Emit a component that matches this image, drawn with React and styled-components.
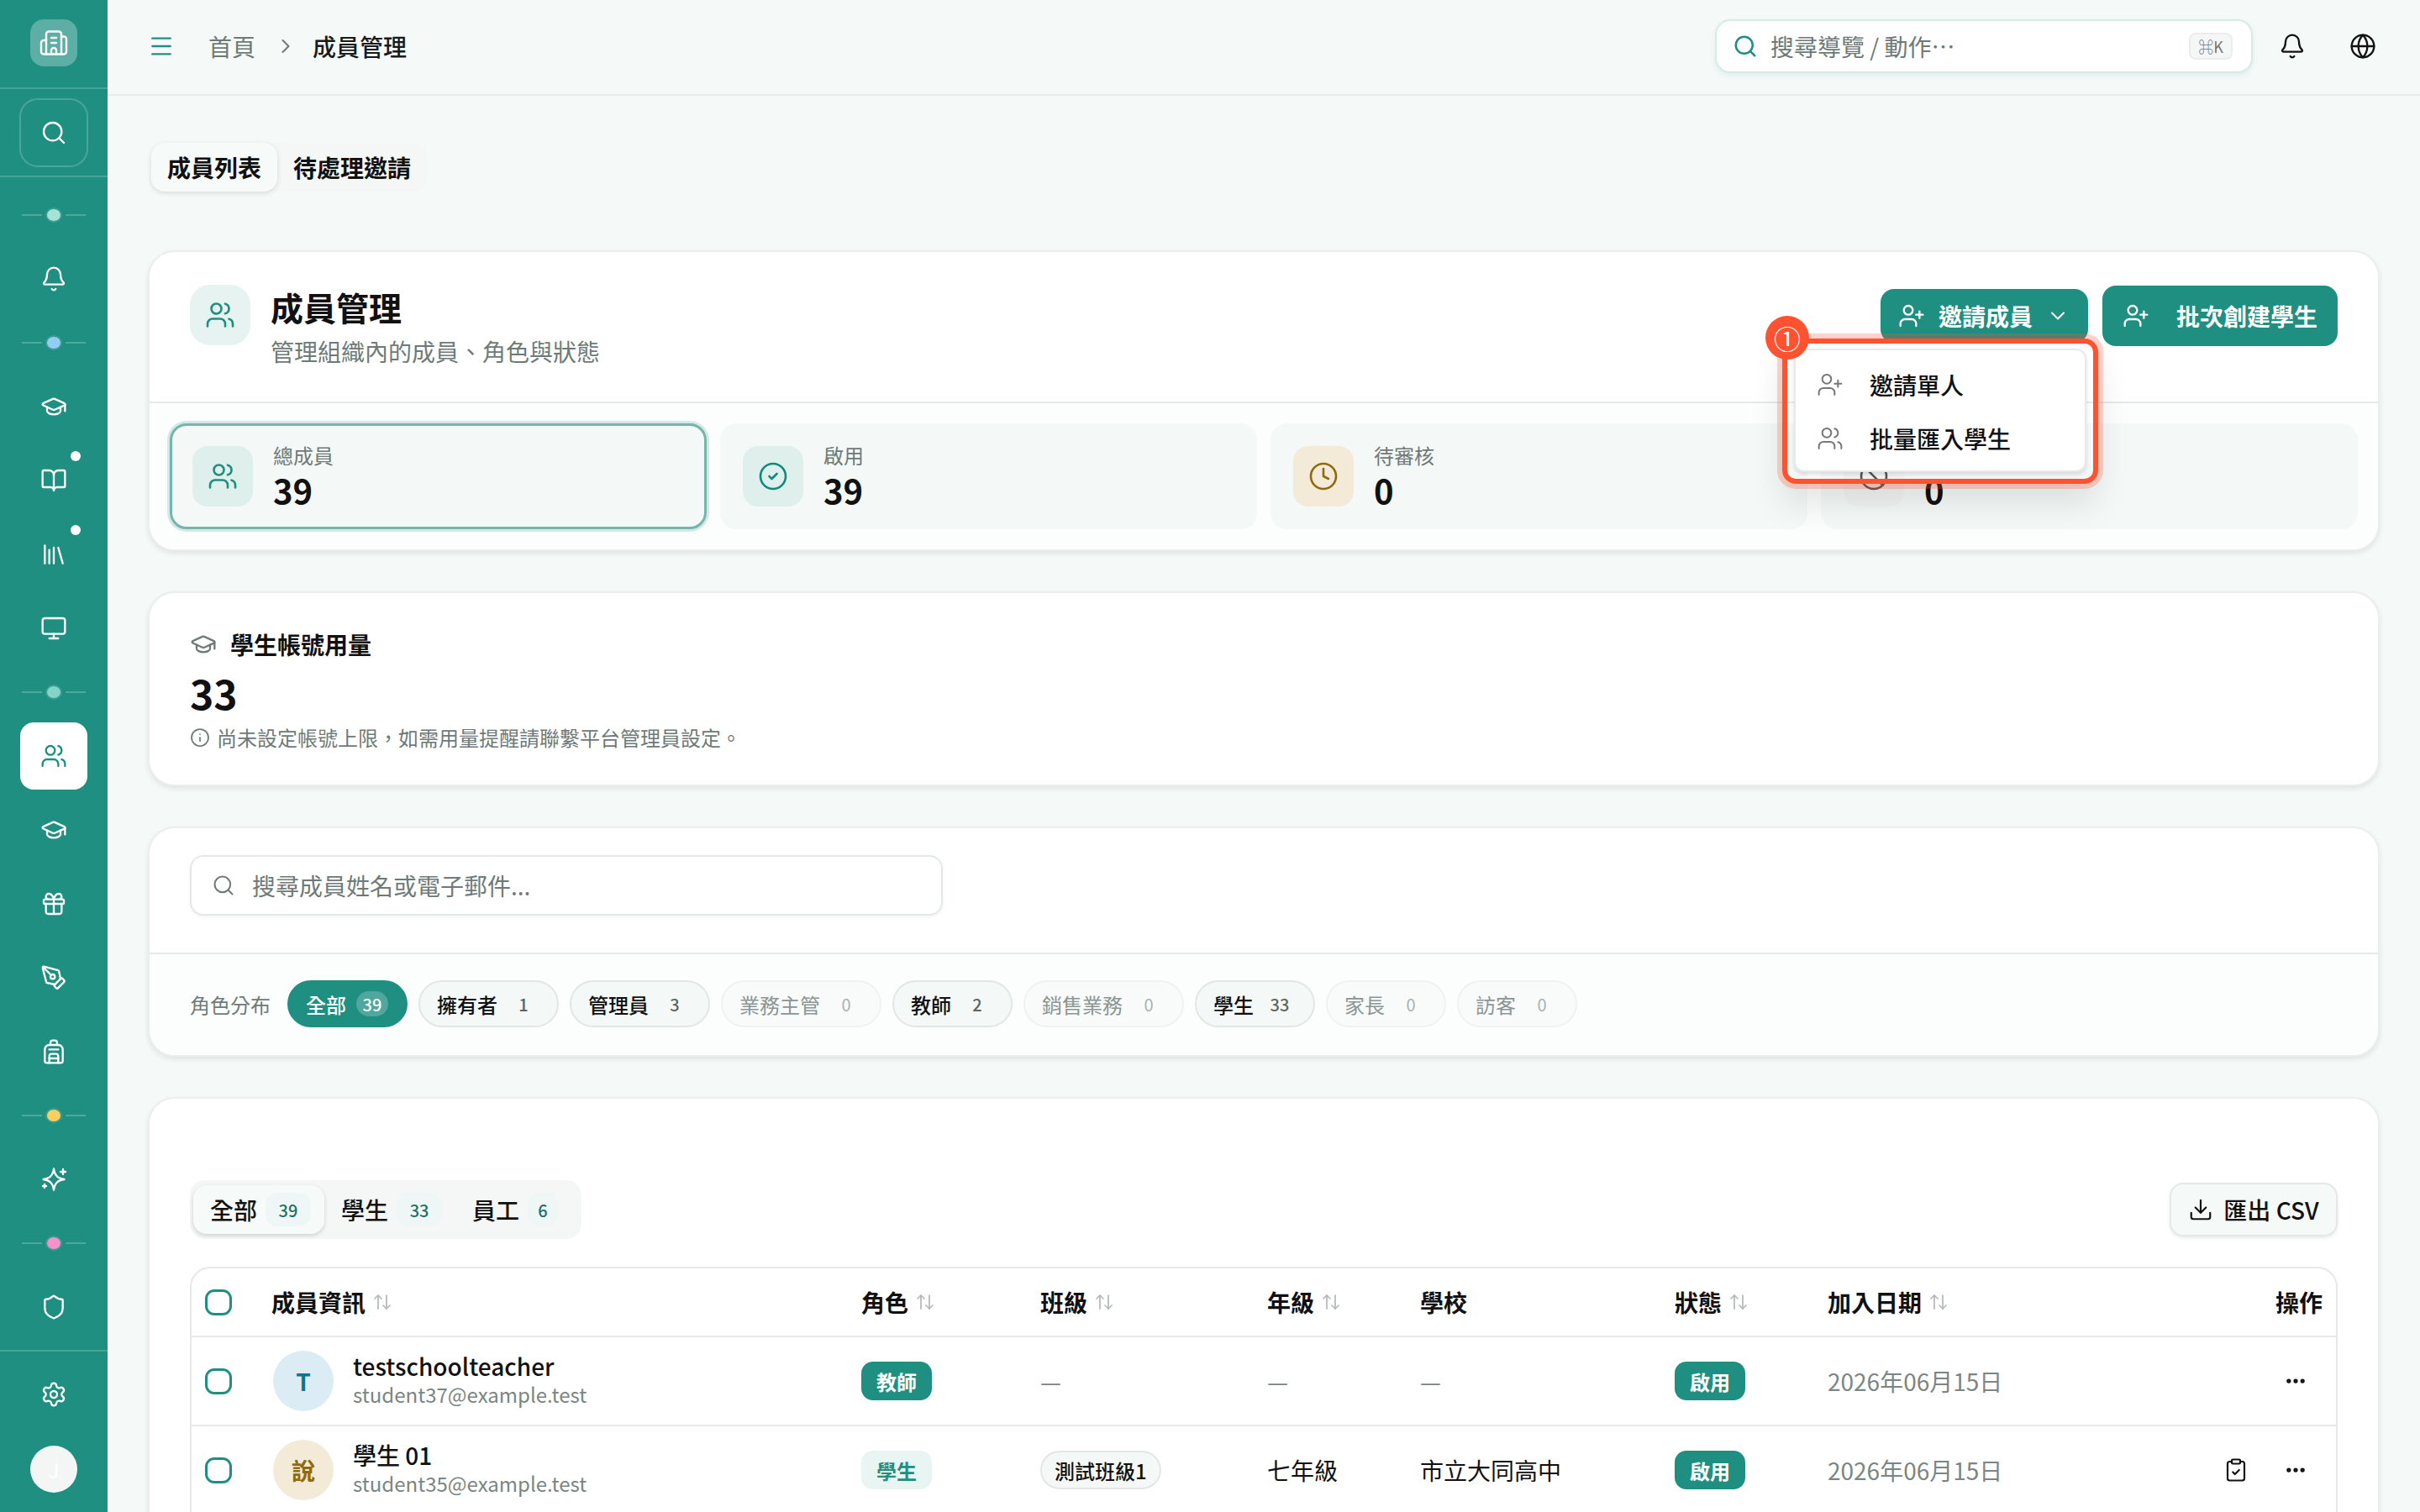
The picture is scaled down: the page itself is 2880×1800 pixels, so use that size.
import React from "react";
import styled, { createGlobalStyle } from "styled-components";
import {
  ArrowUpDown,
  Backpack,
  Ban,
  Bell,
  BookOpen,
  Building2,
  ChevronDown,
  ChevronRight,
  CircleCheck,
  ClipboardCheck,
  Clock,
  Download,
  Ellipsis,
  Gift,
  Globe,
  GraduationCap,
  Info,
  Library,
  Menu,
  Monitor,
  PenTool,
  Search,
  Settings,
  Shield,
  UserPlus,
  Users
} from "lucide-react";

const TEAL = "#1f8f82";

const GlobalStyle = createGlobalStyle`
  html, body {
    margin: 0;
    height: 100%;
    overflow: hidden;
    background: #f5f9f8;
    font-family: "Noto Sans CJK TC", "Noto Sans", sans-serif;
    color: #111;
  }
  * {
    box-sizing: border-box;
  }
`;

const Shell = styled.div`
  display: flex;
  width: 2880px;
  height: 1800px;
  overflow: hidden;
`;

const Sidebar = styled.aside`
  flex: 0 0 128px;
  height: 1800px;
  background: ${TEAL};
  display: flex;
  flex-direction: column;
  align-items: center;
  color: #fff;
`;

const LogoRow = styled.div`
  width: 100%;
  height: 106px;
  display: flex;
  align-items: center;
  justify-content: center;
  padding-bottom: 2px;
  border-bottom: 2px solid rgba(255, 255, 255, 0.18);
`;

const LogoTile = styled.div`
  width: 56px;
  height: 56px;
  border-radius: 16px;
  background: rgba(255, 255, 255, 0.28);
  display: flex;
  align-items: center;
  justify-content: center;
`;

const SearchRow = styled.div`
  width: 100%;
  height: 106px;
  display: flex;
  align-items: center;
  justify-content: center;
  border-bottom: 2px solid rgba(255, 255, 255, 0.18);
`;

const SearchTile = styled.div`
  width: 82px;
  height: 82px;
  border-radius: 22px;
  border: 2px solid rgba(255, 255, 255, 0.2);
  display: flex;
  align-items: center;
  justify-content: center;
`;

const NavList = styled.nav`
  flex: 1;
  display: flex;
  flex-direction: column;
  align-items: center;
  padding-top: 9px;
`;

const NavItem = styled.div`
  position: relative;
  width: 80px;
  height: 80px;
  margin: ${(p) => (p.$tight ? "8px 0 0" : "0")};
  border-radius: 16px;
  display: flex;
  align-items: center;
  justify-content: center;
  background: ${(p) => (p.$active ? "#fff" : "transparent")};
  color: ${(p) => (p.$active ? TEAL : "#fff")};
`;

const NavBadge = styled.span`
  position: absolute;
  top: 5px;
  right: 8px;
  width: 12px;
  height: 12px;
  border-radius: 50%;
  background: #fff;
`;

const Sep = styled.div`
  height: 72px;
  display: flex;
  align-items: center;
  gap: 6px;
`;

const SepLine = styled.span`
  width: 24px;
  height: 2px;
  background: rgba(255, 255, 255, 0.22);
`;

const SepDot = styled.span`
  width: 16px;
  height: 14px;
  border-radius: 50%;
  background: ${(p) => p.$color};
  box-shadow: 0 0 0 2px rgba(255, 255, 255, 0.12);
`;

const SideFooter = styled.div`
  width: 100%;
  border-top: 2px solid rgba(255, 255, 255, 0.18);
  display: flex;
  flex-direction: column;
  align-items: center;
  padding-top: 11px;
  height: 193px;
  margin-top: 11px;
`;

const SideAvatar = styled.div`
  margin-top: 21px;
  width: 56px;
  height: 56px;
  border-radius: 50%;
  background: #f4f6f5;
  color: #fff;
  font-size: 24px;
  display: flex;
  align-items: center;
  justify-content: center;
`;

const Main = styled.main`
  flex: 1;
  min-width: 0;
  display: flex;
  flex-direction: column;
`;

const Topbar = styled.header`
  flex: 0 0 114px;
  display: flex;
  align-items: center;
  padding: 0 50px 2px 48px;
  border-bottom: 2px solid #e7ecea;
`;

const Crumbs = styled.div`
  flex: 1;
  display: flex;
  align-items: center;
  font-size: 28px;
  color: #6e7a78;
`;

const HomeCrumb = styled.span`
  margin-left: 40px;
`;

const CrumbArrow = styled.span`
  display: flex;
  margin: 0 18px 0 22px;
`;

const CrumbCurrent = styled.span`
  color: #1a1a1a;
  font-weight: 500;
`;

const TopSearch = styled.div`
  width: 640px;
  height: 64px;
  margin-top: 0;
  border-radius: 18px;
  background: #fff;
  border: 2px solid #d6ebe6;
  box-shadow: 0 3px 6px rgba(31, 143, 130, 0.1);
  display: flex;
  align-items: center;
  padding: 0 22px 0 19px;
  gap: 15px;
  font-size: 28px;
  color: #6e7a78;
`;

const Placeholder = styled.span`
  flex: 1;
`;

const Kbd = styled.span`
  width: 52px;
  height: 32px;
  border-radius: 8px;
  border: 2px solid #e9eeec;
  background: #f5f7f6;
  font-size: 18px;
  color: #6e7a78;
  display: flex;
  align-items: center;
  justify-content: center;
`;

const TopIcons = styled.div`
  display: flex;
  align-items: center;
  gap: 52px;
  margin-left: 31px;
  margin-right: 2px;
  color: #111;
`;

const Content = styled.div`
  flex: 1;
  padding: 56px 48px 0;
  display: flex;
  flex-direction: column;
  gap: 48px;
`;

const PageTabs = styled.div`
  align-self: flex-start;
  margin: 0 0 22px 4px;
  height: 58px;
  display: flex;
  align-items: center;
  background: #f4f7f6;
  border-radius: 16px;
`;

const PageTab = styled.div`
  height: 58px;
  padding: 0 19px;
  border-radius: 16px;
  display: flex;
  align-items: center;
  font-size: 28px;
  font-weight: 600;
  background: ${(p) => (p.$active ? "#f6faf9" : "transparent")};
  box-shadow: ${(p) => (p.$active ? "0 2px 6px rgba(0, 0, 0, 0.12)" : "none")};
`;

const Card = styled.section`
  flex: none;
  background: #fff;
  border: 2px solid #eceeed;
  border-radius: 32px;
  box-shadow: 0 3px 6px rgba(0, 0, 0, 0.09);
`;

const HeadRow = styled.div`
  height: 180px;
  padding: 0 48px;
  display: flex;
  align-items: center;
  gap: 24px;
  border-bottom: 2px solid #e7e9e8;
`;

const HeadTile = styled.div`
  width: 72px;
  height: 72px;
  margin-bottom: 28px;
  border-radius: 24px;
  background: #e6f3f0;
  color: ${TEAL};
  display: flex;
  align-items: center;
  justify-content: center;
`;

const HeadText = styled.div`
  flex: 1;
  margin-bottom: 4px;
`;

const PageTitle = styled.h1`
  margin: 0 0 4px;
  font-size: 39px;
  line-height: 58px;
  font-weight: 700;
`;

const PageSub = styled.p`
  margin: 0;
  font-size: 28px;
  line-height: 40px;
  color: #6e7a78;
`;

const HeadActions = styled.div`
  display: flex;
  align-items: flex-start;
  gap: 17px;
  margin: 0 0 26px 0;
`;

const MenuAnchor = styled.div`
  position: relative;
  padding-top: 4px;
`;

const PrimaryButton = styled.button`
  height: ${(p) => (p.$tall ? "72px" : "64px")};
  border: 0;
  border-radius: 16px;
  background: ${TEAL};
  color: #fff;
  font: inherit;
  font-size: 28px;
  font-weight: 600;
  padding: ${(p) => (p.$tall ? "0 24px" : "0 22px 0 21px")};
  display: flex;
  align-items: center;
  gap: ${(p) => p.$gap};
`;

const Highlight = styled.div`
  position: absolute;
  top: 63px;
  right: -12px;
  width: 376px;
  height: 173px;
  border: 6px solid #ff5230;
  border-radius: 16px;
  box-shadow: 0 0 0 6px rgba(255, 82, 48, 0.25), 0 24px 40px rgba(0, 0, 0, 0.1);
  padding: 6px 8px 8px;
  z-index: 3;
`;

const Marker = styled.div`
  position: absolute;
  top: -33px;
  left: -26px;
  width: 52px;
  height: 52px;
  border-radius: 50%;
  background: #ff5230;
  color: #fff;
  font-size: 32px;
  display: flex;
  align-items: center;
  justify-content: center;
`;

const Dropdown = styled.div`
  height: 100%;
  border-radius: 12px;
  background: #fff;
  border: 2px solid #e8eaea;
  box-shadow: 0 3px 5px rgba(0, 0, 0, 0.12);
  padding: 9px 0;
`;

const DropItem = styled.div`
  height: 64px;
  padding: 0 25px;
  display: flex;
  align-items: center;
  gap: 31px;
  font-size: 28px;
  font-weight: 500;
  color: #111;
`;

const DropIcon = styled.span`
  display: flex;
  color: #777;
`;

const StatGrid = styled.div`
  display: grid;
  grid-template-columns: repeat(4, 1fr);
  gap: 16px;
  padding: 24px;
  background: #fcfdfd;
  border-radius: 0 0 30px 30px;
`;

const Stat = styled.div`
  height: 126px;
  padding: 0 24px;
  border-radius: 20px;
  background: #f4f9f7;
  display: flex;
  align-items: center;
  gap: 24px;
  border: 3px solid ${(p) => (p.$active ? "#76b5ac" : "transparent")};
  box-shadow: ${(p) => (p.$active ? "0 0 0 3px rgba(31, 143, 130, 0.18)" : "none")};
`;

const StatTile = styled.div`
  width: 72px;
  height: 72px;
  border-radius: 18px;
  background: ${(p) => p.$bg};
  color: ${(p) => p.$fg};
  display: flex;
  align-items: center;
  justify-content: center;
`;

const StatLabel = styled.div`
  font-size: 24px;
  line-height: 32px;
  color: #6e7a78;
`;

const StatValue = styled.div`
  font-size: 40px;
  line-height: 50px;
  font-weight: 700;
`;

const UsageCard = styled(Card)`
  height: 232px;
  padding: 41px 48px 0;
`;

const UsageTitle = styled.div`
  display: flex;
  align-items: center;
  gap: 16px;
  font-size: 28px;
  line-height: 40px;
  font-weight: 600;
  svg {
    color: #6e7a78;
  }
`;

const UsageValue = styled.div`
  font-size: 48px;
  line-height: 74px;
  margin-bottom: 1px;
  font-weight: 700;
`;

const UsageNote = styled.div`
  display: flex;
  align-items: center;
  gap: 8px;
  font-size: 24px;
  line-height: 32px;
  color: #6e7a78;
`;

const SearchPane = styled.div`
  height: 150px;
  padding: 32px 48px 0;
  border-bottom: 2px solid #e7e9e8;
`;

const SearchInput = styled.div`
  width: 896px;
  height: 72px;
  border: 2px solid #e4e8e6;
  border-radius: 16px;
  box-shadow: 0 2px 4px rgba(0, 0, 0, 0.05);
  display: flex;
  align-items: center;
  gap: 20px;
  padding: 0 24px;
  font-size: 28px;
  color: #6e7a78;
`;

const RolePane = styled.div`
  height: 120px;
  padding: 0 48px 2px;
  display: flex;
  align-items: center;
  gap: 13px;
  background: #fcfdfd;
  border-radius: 0 0 30px 30px;
`;

const RoleLabel = styled.span`
  width: 96px;
  margin-right: 7px;
  font-size: 24px;
  color: #6e7a78;
`;

const Chip = styled.div`
  height: 56px;
  padding: 0 21px 0 20px;
  border-radius: 28px;
  display: flex;
  align-items: center;
  gap: 12px;
  font-size: 24px;
  font-weight: ${(p) => (p.$active || p.$filled ? 500 : 400)};
  color: ${(p) => (p.$active ? "#fff" : p.$filled ? "#111" : "#8b9593")};
  background: ${(p) => (p.$active ? TEAL : p.$filled ? "#f4f8f7" : "#f9fbfa")};
  border: 2px solid ${(p) => (p.$active ? TEAL : p.$filled ? "#e2e7e5" : "#eff2f1")};
`;

const ChipCount = styled.span`
  min-width: 38px;
  height: 30px;
  padding: 0 6px;
  border-radius: 15px;
  display: flex;
  align-items: center;
  justify-content: center;
  font-size: 20px;
  color: ${(p) => (p.$active ? "#fff" : p.$filled ? "#5b6664" : "#a9b2b0")};
  background: ${(p) => (p.$active ? "rgba(255, 255, 255, 0.22)" : "transparent")};
`;

const TableCard = styled(Card)`
  padding: 97px 48px 0;
  border-radius: 32px 32px 0 0;
  height: 560px;
`;

const ToolRow = styled.div`
  display: flex;
  align-items: center;
  justify-content: space-between;
  margin-bottom: 33px;
`;

const ViewTabs = styled.div`
  height: 70px;
  padding: 0 12px 0 4px;
  border-radius: 18px;
  background: #f5f7f6;
  display: flex;
  align-items: center;
`;

const ViewTab = styled.div`
  height: 58px;
  padding: 0 16px 0 20px;
  border-radius: 16px;
  display: flex;
  align-items: center;
  gap: 10px;
  font-size: 28px;
  font-weight: 500;
  background: ${(p) => (p.$active ? "#f6faf9" : "transparent")};
  box-shadow: ${(p) => (p.$active ? "0 2px 5px rgba(0, 0, 0, 0.16)" : "none")};
`;

const ViewCount = styled.span`
  min-width: ${(p) => (p.$narrow ? "36px" : "54px")};
  height: 40px;
  border-radius: 14px;
  background: #eef7f5;
  color: #1c7267;
  font-size: 20px;
  display: flex;
  align-items: center;
  justify-content: center;
`;

const ExportButton = styled.button`
  width: 200px;
  height: 64px;
  border: 2px solid #e4e8e6;
  border-radius: 16px;
  background: #f5f9f8;
  box-shadow: 0 2px 4px rgba(0, 0, 0, 0.08);
  font: inherit;
  font-size: 28px;
  font-weight: 500;
  color: #111;
  display: flex;
  align-items: center;
  justify-content: center;
  gap: 12px;
`;

const Table = styled.div`
  border: 2px solid #e6e9e8;
  border-bottom: 0;
  border-radius: 24px 24px 0 0;
`;

const cols = "95px 702px 213px 270px 182px 303px 182px 300px 1fr";

const HeadCells = styled.div`
  display: grid;
  grid-template-columns: ${cols};
  height: 82px;
  align-items: center;
  border-bottom: 2px solid #e6e9e8;
  font-size: 28px;
  font-weight: 600;
`;

const Row = styled.div`
  display: grid;
  grid-template-columns: ${cols};
  height: 106px;
  align-items: center;
  border-bottom: 2px solid #e6e9e8;
  font-size: 28px;
`;

const HeadCell = styled.div`
  display: flex;
  align-items: center;
  gap: 8px;
  justify-content: ${(p) => (p.$end ? "flex-end" : "flex-start")};
  padding-right: ${(p) => (p.$end ? "16px" : "0")};
  svg {
    color: #b4b9b8;
  }
`;

const CheckCell = styled.div`
  padding-left: 16px;
`;

const Check = styled.span`
  display: block;
  width: 32px;
  height: 31px;
  border: 3px solid ${TEAL};
  border-radius: 11px;
  background: #fff;
`;

const Member = styled.div`
  display: flex;
  align-items: center;
  gap: 23px;
  padding-left: 2px;
`;

const Avatar = styled.div`
  width: 72px;
  height: 72px;
  border-radius: 50%;
  background: ${(p) => p.$bg};
  color: ${(p) => p.$fg};
  font-size: 28px;
  font-weight: 600;
  display: flex;
  align-items: center;
  justify-content: center;
`;

const MemberText = styled.div`
  padding-bottom: 4px;
`;

const MemberName = styled.div`
  font-size: 28px;
  line-height: 36px;
  font-weight: 500;
`;

const MemberMail = styled.div`
  font-size: 24px;
  line-height: 32px;
  color: #7b8583;
`;

const Badge = styled.span`
  display: inline-flex;
  align-items: center;
  justify-content: center;
  height: 46px;
  padding: 0 18px;
  border-radius: 14px;
  font-size: 24px;
  font-weight: 600;
  background: ${(p) => (p.$soft ? "#e8f5f2" : TEAL)};
  color: ${(p) => (p.$soft ? TEAL : "#fff")};
`;

const ClassChip = styled.span`
  display: inline-flex;
  align-items: center;
  height: 46px;
  padding: 0 15px;
  border-radius: 23px;
  background: #f4f9f7;
  border: 2px solid #e2e7e5;
  font-size: 24px;
  font-weight: 500;
`;

const Muted = styled.span`
  color: #7b8583;
`;

const ActionCell = styled.div`
  display: flex;
  align-items: center;
  justify-content: flex-end;
  gap: 42px;
  padding-right: 34px;
`;

// lucide's sparkles sits off-centre, the one in the rail is centred with two small crosses
function StarIcon() {
  return (
    <svg width="32" height="32" viewBox="0 0 32 32" fill="none" stroke="currentColor" strokeWidth="2.3" strokeLinecap="round" strokeLinejoin="round">
      <path d="M16 3.5C17.2 11.5 20.5 14.8 28.5 16C20.5 17.2 17.2 20.5 16 28.5C14.8 20.5 11.5 17.2 3.5 16C11.5 14.8 14.8 11.5 16 3.5Z" />
      <path d="M27 4v6M24 7h6" />
      <path d="M5 22v4M3 24h4" />
    </svg>
  );
}

const navIcon = { size: 32, strokeWidth: 1.75 };

const Rail = [
  { dot: "#a5e3d6" },
  { icon: Bell },
  { dot: "#93cdf6" },
  { icon: GraduationCap },
  { icon: BookOpen, badge: true, tight: true },
  { icon: Library, badge: true, tight: true },
  { icon: Monitor, tight: true },
  { dot: "#84d3c8" },
  { icon: Users, active: true },
  { icon: GraduationCap, tight: true },
  { icon: Gift, tight: true },
  { icon: PenTool, tight: true },
  { icon: Backpack, tight: true },
  { dot: "#ffce5c" },
  { icon: StarIcon },
  { dot: "#f592cb" },
  { icon: Shield }
];

const roles = [
  { name: "全部", count: 39, active: true },
  { name: "擁有者", count: 1, filled: true },
  { name: "管理員", count: 3, filled: true },
  { name: "業務主管", count: 0 },
  { name: "教師", count: 2, filled: true },
  { name: "銷售業務", count: 0 },
  { name: "學生", count: 33, filled: true },
  { name: "家長", count: 0 },
  { name: "訪客", count: 0 }
];

const stats = [
  { label: "總成員", value: 39, Icon: Users, bg: "#dfefec", fg: TEAL, active: true },
  { label: "啟用", value: 39, Icon: CircleCheck, bg: "#dfefec", fg: "#0f8a7c" },
  { label: "待審核", value: 0, Icon: Clock, bg: "#f3ead7", fg: "#8f6b10" },
  { label: "停用", value: 0, Icon: Ban, bg: "#f1f4f3", fg: "#555" }
];

const sortableHeads = [
  ["角色", true],
  ["班級", true],
  ["年級", true],
  ["學校", false],
  ["狀態", true],
  ["加入日期", true]
];

function SortIcon() {
  return <ArrowUpDown size={24} strokeWidth={1.75} />;
}

function SideNav() {
  return (
    <NavList>
      {Rail.map((item, i) =>
        item.dot ? (
          <Sep key={i}>
            <SepLine />
            <SepDot $color={item.dot} />
            <SepLine />
          </Sep>
        ) : (
          <NavItem key={i} $active={item.active} $tight={item.tight}>
            <item.icon {...navIcon} />
            {item.badge && <NavBadge />}
          </NavItem>
        )
      )}
    </NavList>
  );
}

export default function App() {
  return (
    <Shell>
      <GlobalStyle />
      <Sidebar>
        <LogoRow>
          <LogoTile>
            <Building2 size={36} strokeWidth={1.6} />
          </LogoTile>
        </LogoRow>
        <SearchRow>
          <SearchTile>
            <Search {...navIcon} />
          </SearchTile>
        </SearchRow>
        <SideNav />
        <SideFooter>
          <NavItem>
            <Settings {...navIcon} />
          </NavItem>
          <SideAvatar>J</SideAvatar>
        </SideFooter>
      </Sidebar>

      <Main>
        <Topbar>
          <Crumbs>
            <Menu size={32} strokeWidth={1.75} color={TEAL} />
            <HomeCrumb>首頁</HomeCrumb>
            <CrumbArrow>
              <ChevronRight size={28} strokeWidth={1.75} />
            </CrumbArrow>
            <CrumbCurrent>成員管理</CrumbCurrent>
          </Crumbs>
          <TopSearch>
            <Search size={30} strokeWidth={2} color={TEAL} />
            <Placeholder>搜尋導覽 / 動作…</Placeholder>
            <Kbd>⌘K</Kbd>
          </TopSearch>
          <TopIcons>
            <Bell size={32} strokeWidth={1.75} />
            <Globe size={32} strokeWidth={1.75} />
          </TopIcons>
        </Topbar>

        <Content>
          <PageTabs>
            <PageTab $active>成員列表</PageTab>
            <PageTab>待處理邀請</PageTab>
          </PageTabs>

          <Card>
            <HeadRow>
              <HeadTile>
                <Users size={36} strokeWidth={1.75} />
              </HeadTile>
              <HeadText>
                <PageTitle>成員管理</PageTitle>
                <PageSub>管理組織內的成員、角色與狀態</PageSub>
              </HeadText>
              <HeadActions>
                <MenuAnchor>
                  <PrimaryButton $gap="16px">
                    <UserPlus size={32} strokeWidth={1.75} />
                    邀請成員
                    <ChevronDown size={28} strokeWidth={1.75} />
                  </PrimaryButton>
                  <Highlight>
                    <Marker>①</Marker>
                    <Dropdown>
                      <DropItem>
                        <DropIcon>
                          <UserPlus size={32} strokeWidth={1.5} />
                        </DropIcon>
                        邀請單人
                      </DropItem>
                      <DropItem>
                        <DropIcon>
                          <Users size={32} strokeWidth={1.5} />
                        </DropIcon>
                        批量匯入學生
                      </DropItem>
                    </Dropdown>
                  </Highlight>
                </MenuAnchor>
                <PrimaryButton $tall $gap="32px">
                  <UserPlus size={32} strokeWidth={1.75} />
                  批次創建學生
                </PrimaryButton>
              </HeadActions>
            </HeadRow>
            <StatGrid>
              {stats.map(({ label, value, Icon, bg, fg, active }) => (
                <Stat key={label} $active={active}>
                  <StatTile $bg={bg} $fg={fg}>
                    <Icon size={36} strokeWidth={1.75} />
                  </StatTile>
                  <div>
                    <StatLabel>{label}</StatLabel>
                    <StatValue>{value}</StatValue>
                  </div>
                </Stat>
              ))}
            </StatGrid>
          </Card>

          <UsageCard>
            <UsageTitle>
              <GraduationCap size={32} strokeWidth={1.75} />
              學生帳號用量
            </UsageTitle>
            <UsageValue>33</UsageValue>
            <UsageNote>
              <Info size={24} strokeWidth={1.75} />
              尚未設定帳號上限，如需用量提醒請聯繫平台管理員設定。
            </UsageNote>
          </UsageCard>

          <Card>
            <SearchPane>
              <SearchInput>
                <Search size={28} strokeWidth={1.75} />
                搜尋成員姓名或電子郵件...
              </SearchInput>
            </SearchPane>
            <RolePane>
              <RoleLabel>角色分布</RoleLabel>
              {roles.map((r) => (
                <Chip key={r.name} $active={r.active} $filled={r.filled}>
                  {r.name}
                  <ChipCount $active={r.active} $filled={r.filled}>
                    {r.count}
                  </ChipCount>
                </Chip>
              ))}
            </RolePane>
          </Card>

          <TableCard>
            <ToolRow>
              <ViewTabs>
                <ViewTab $active>
                  全部<ViewCount>39</ViewCount>
                </ViewTab>
                <ViewTab>
                  學生<ViewCount>33</ViewCount>
                </ViewTab>
                <ViewTab>
                  員工<ViewCount $narrow>6</ViewCount>
                </ViewTab>
              </ViewTabs>
              <ExportButton>
                <Download size={30} strokeWidth={1.75} />
                匯出 CSV
              </ExportButton>
            </ToolRow>
            <Table>
              <HeadCells>
                <CheckCell>
                  <Check />
                </CheckCell>
                <HeadCell>
                  成員資訊
                  <SortIcon />
                </HeadCell>
                {sortableHeads.map(([name, sortable]) => (
                  <HeadCell key={name}>
                    {name}
                    {sortable && <SortIcon />}
                  </HeadCell>
                ))}
                <HeadCell $end>操作</HeadCell>
              </HeadCells>
              <Row>
                <CheckCell>
                  <Check />
                </CheckCell>
                <Member>
                  <Avatar $bg="#dcecf4" $fg="#0e7490">
                    T
                  </Avatar>
                  <MemberText>
                    <MemberName>testschoolteacher</MemberName>
                    <MemberMail>student37@example.test</MemberMail>
                  </MemberText>
                </Member>
                <div>
                  <Badge>教師</Badge>
                </div>
                <Muted>—</Muted>
                <Muted>—</Muted>
                <Muted>—</Muted>
                <div>
                  <Badge>啟用</Badge>
                </div>
                <Muted>2026年06月15日</Muted>
                <ActionCell>
                  <Ellipsis size={28} strokeWidth={2.5} />
                </ActionCell>
              </Row>
              <Row>
                <CheckCell>
                  <Check />
                </CheckCell>
                <Member>
                  <Avatar $bg="#f3ead7" $fg="#8f6b10">
                    說
                  </Avatar>
                  <MemberText>
                    <MemberName>學生 01</MemberName>
                    <MemberMail>student35@example.test</MemberMail>
                  </MemberText>
                </Member>
                <div>
                  <Badge $soft>學生</Badge>
                </div>
                <div>
                  <ClassChip>測試班級1</ClassChip>
                </div>
                <div>七年級</div>
                <div>市立大同高中</div>
                <div>
                  <Badge>啟用</Badge>
                </div>
                <Muted>2026年06月15日</Muted>
                <ActionCell>
                  <ClipboardCheck size={30} strokeWidth={1.75} />
                  <Ellipsis size={28} strokeWidth={2.5} />
                </ActionCell>
              </Row>
            </Table>
          </TableCard>
        </Content>
      </Main>
    </Shell>
  );
}
